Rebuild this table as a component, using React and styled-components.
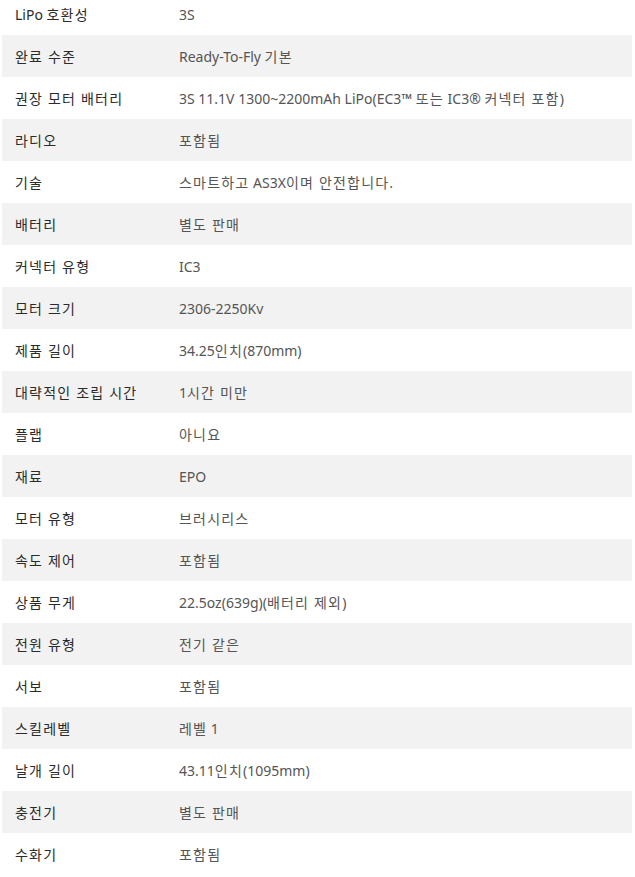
import React from "react";
import styled, { createGlobalStyle } from "styled-components";

const Global = createGlobalStyle`
  html, body { margin: 0; padding: 0; background: #fff; }
  body { font-family: "Noto Sans", "Noto Sans CJK KR", sans-serif; overflow: hidden; }
`;

const Wrap = styled.div`
  padding: 0 3px 0 2px;
  margin-top: -7px;
`;

const Table = styled.div`
  display: grid;
  grid-template-columns: 164px 1fr;
  width: 630px;
`;

const Row = styled.div`
  display: contents;
  & > div { background: ${p => (p.$alt ? "#f2f2f2" : "#fff")}; }
`;

const Label = styled.div`
  height: 42px;
  display: flex;
  align-items: center;
  padding-left: 13px;
  font-size: 14px;
  color: #2b2b2b;
  white-space: nowrap;
`;

const Value = styled.div`
  height: 42px;
  display: flex;
  align-items: center;
  padding-left: 13px;
  font-size: 14px;
  color: #555;
  white-space: pre;
`;

const Hangul = styled.span`
  letter-spacing: 1.2px;
`;

const rows = [
  ["LiPo 호환성", "3S"],
  ["완료 수준", "Ready-To-Fly 기본"],
  ["권장 모터 배터리", "3S 11.1V 1300~2200mAh LiPo(EC3™ 또는 IC3® 커넥터 포함)"],
  ["라디오", "포함됨"],
  ["기술", "스마트하고 AS3X이며 안전합니다."],
  ["배터리", "별도 판매"],
  ["커넥터 유형", "IC3"],
  ["모터 크기", "2306-2250Kv"],
  ["제품 길이", "34.25인치(870mm)"],
  ["대략적인 조립 시간", "1시간 미만"],
  ["플랩", "아니요"],
  ["재료", "EPO"],
  ["모터 유형", "브러시리스"],
  ["속도 제어", "포함됨"],
  ["상품 무게", "22.5oz(639g)(배터리 제외)"],
  ["전원 유형", "전기 같은"],
  ["서보", "포함됨"],
  ["스킬레벨", "레벨 1"],
  ["날개 길이", "43.11인치(1095mm)"],
  ["충전기", "별도 판매"],
  ["수화기", "포함됨"],
];

function Text({ s }) {
  const parts = s.split(/([\uAC00-\uD7A3]+(?:\s[\uAC00-\uD7A3]+)*)/);
  return parts.map((p, i) =>
    /[\uAC00-\uD7A3]/.test(p) ? <Hangul key={i}>{p}</Hangul> : <React.Fragment key={i}>{p}</React.Fragment>
  );
}

export default function App() {
  return (
    <>
      <Global />
      <Wrap>
        <Table>
          {rows.map(([k, v], i) => (
            <Row key={i} $alt={i % 2 === 1}>
              <Label><span><Text s={k} /></span></Label>
              <Value><span><Text s={v} /></span></Value>
            </Row>
          ))}
        </Table>
      </Wrap>
    </>
  );
}
